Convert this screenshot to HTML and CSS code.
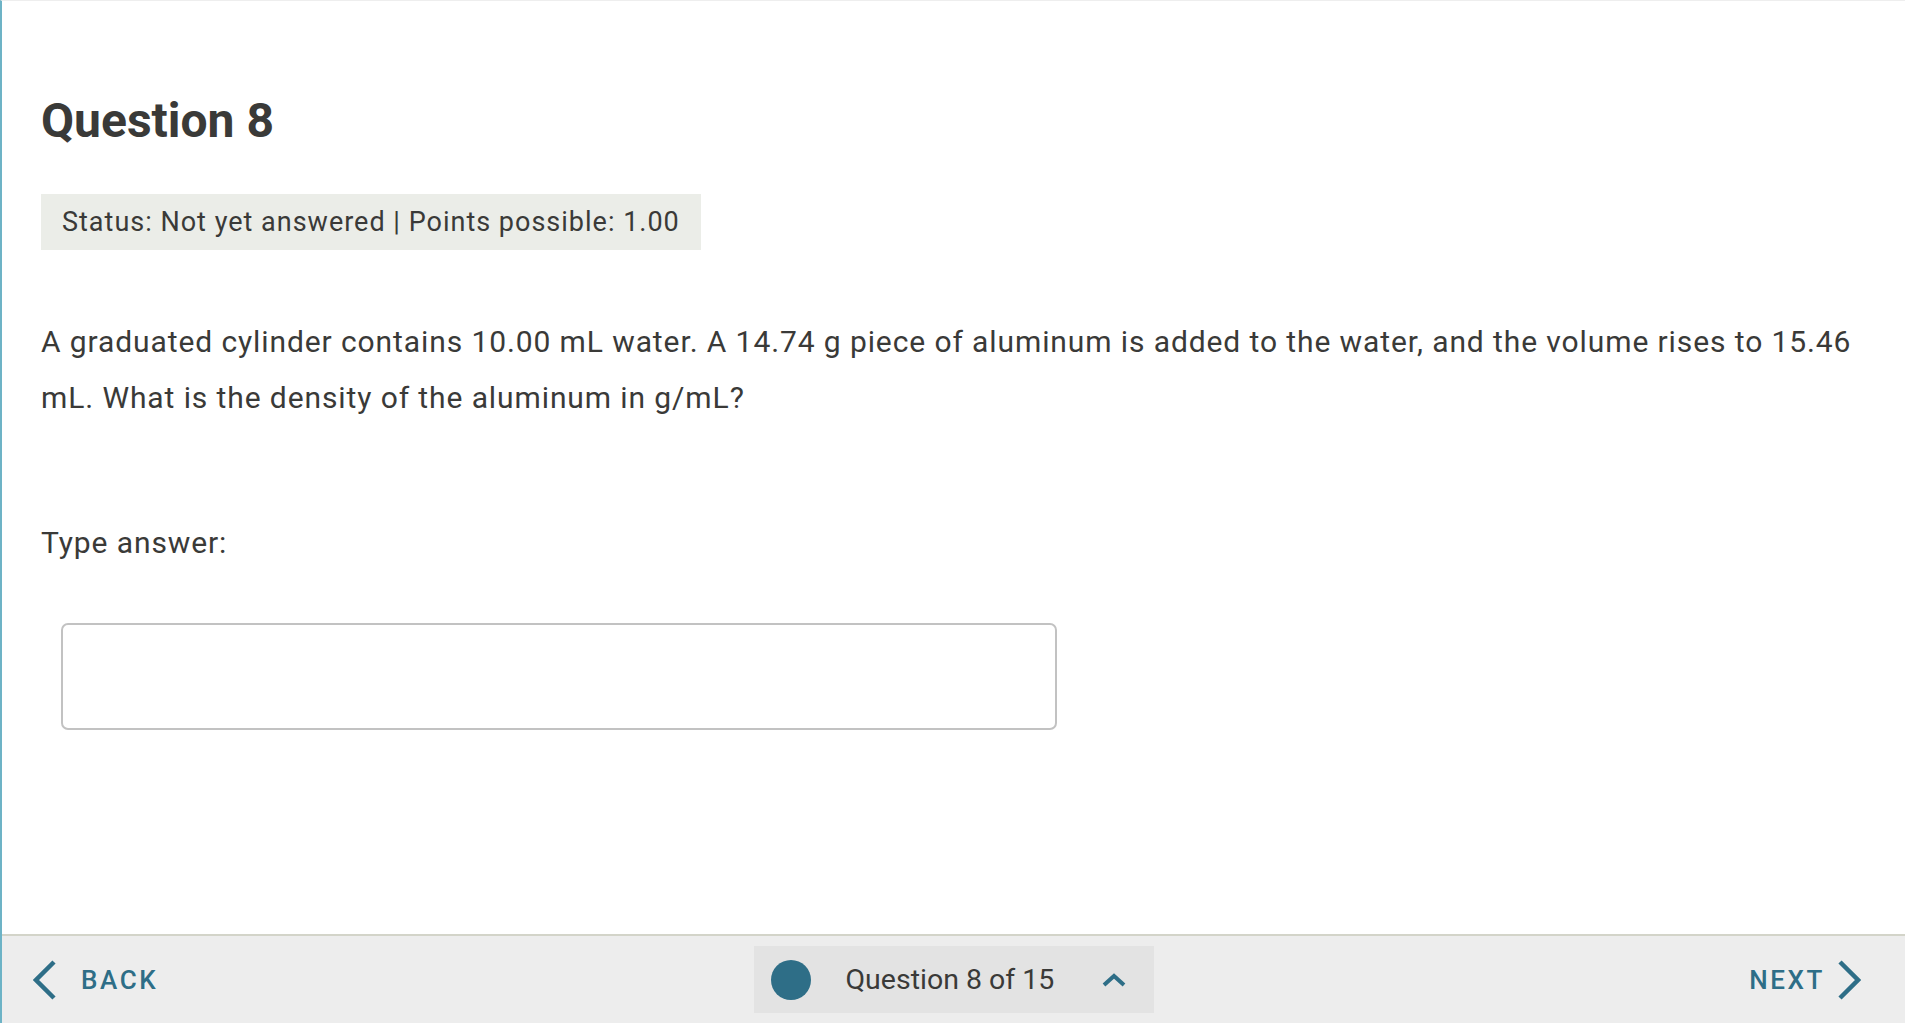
FILE: index.html
```html
<!DOCTYPE html>
<html lang="en">
<head>
<meta charset="utf-8">
<title>Question 8</title>
<link rel="stylesheet" href="styles.css">
</head>
<body>
<div class="page">
  <main class="content">
    <h1 class="q-title">Question 8</h1>
    <div class="status">Status: Not yet answered | Points possible: 1.00</div>
    <p class="q-text">A graduated cylinder contains 10.00 mL water. A 14.74 g piece of aluminum is added to the water, and the volume rises to 15.46 mL. What is the density of the aluminum in g/mL?</p>
    <label class="answer-label" for="answer">Type answer:</label>
    <input class="answer-input" id="answer" type="text">
  </main>
  <footer class="nav">
    <div class="nav-left">
      <a class="nav-btn back" href="#">
        <svg class="chev" viewBox="0 0 24 40" width="24" height="40"><polyline points="21,2 3,20 21,38" /></svg>
        <span>BACK</span>
      </a>
    </div>
    <div class="progress">
      <span class="dot"></span>
      <span class="progress-text">Question 8 of 15</span>
      <svg class="caret" viewBox="0 0 24 14" width="24" height="14"><polyline points="2,12 12,3 22,12" /></svg>
    </div>
    <div class="nav-right">
      <a class="nav-btn next" href="#">
        <span>NEXT</span>
        <svg class="chev" viewBox="0 0 24 40" width="24" height="40"><polyline points="3,2 21,20 3,38" /></svg>
      </a>
    </div>
  </footer>
</div>
</body>
</html>
```
FILE: styles.css
```css
html, body {
  margin: 0;
  padding: 0;
  background: #ffffff;
}
body {
  font-family: Roboto, "Liberation Sans", Arial, sans-serif;
  color: #3a3a38;
}
.page {
  height: 100vh;
  box-sizing: border-box;
  display: flex;
  flex-direction: column;
  border-left: 2px solid #6db3c6;
  border-top: 1px solid #eeeeee;
}
.content {
  flex: 1;
  padding: 0 40px 0 39px;
}
.q-title {
  margin: 92px 0 45px;
  font-size: 48px;
  line-height: 56px;
  font-weight: 700;
  color: #3a3a38;
}
.status {
  display: flex;
  align-items: center;
  width: fit-content;
  height: 56px;
  padding: 0 21px;
  background: #ebede8;
  font-size: 27px;
  letter-spacing: 1px;
  color: #3a3a38;
}
.q-text {
  margin: 64px 0 0;
  font-size: 30px;
  letter-spacing: 0.9px;
  line-height: 56px;
  color: #3a3a38;
}
.answer-label {
  display: block;
  margin-top: 99px;
  font-size: 30px;
  letter-spacing: 0.9px;
  line-height: 35px;
  color: #3a3a38;
}
.answer-input {
  display: block;
  margin: 63px 0 0 20px;
  width: 996px;
  height: 107px;
  box-sizing: border-box;
  border: 2px solid #c2c2c2;
  border-radius: 7px;
  background: #fff;
  font: inherit;
  font-size: 29px;
  padding: 0 16px;
}
.nav {
  height: 89px;
  box-sizing: border-box;
  border-top: 2px solid #d3d4c9;
  background: #ededed;
  display: grid;
  grid-template-columns: 1fr auto 1fr;
  align-items: center;
}
.nav-left {
  padding-left: 31px;
  display: flex;
}
.nav-right {
  padding-right: 44px;
  display: flex;
  justify-content: flex-end;
}
.nav-btn {
  display: flex;
  align-items: center;
  gap: 24px;
  text-decoration: none;
  color: #2e6e87;
  font-size: 26px;
  font-weight: 500;
  letter-spacing: 2.6px;
}
.nav-btn.next {
  gap: 12px;
}
.chev {
  display: block;
  fill: none;
  stroke: #2e6e87;
  stroke-width: 4.5;
  stroke-linejoin: miter;
}
.progress {
  display: flex;
  align-items: center;
  height: 67px;
  width: 400px;
  box-sizing: border-box;
  padding-left: 17px;
  background: #e3e3e3;
}
.dot {
  width: 40px;
  height: 40px;
  border-radius: 50%;
  background: #2e6e87;
  flex: none;
}
.progress-text {
  margin-left: 35px;
  font-size: 28.5px;
  color: #3a3a38;
}
.caret {
  display: block;
  margin-left: 48px;
  fill: none;
  stroke: #2e6e87;
  stroke-width: 4;
}
```
